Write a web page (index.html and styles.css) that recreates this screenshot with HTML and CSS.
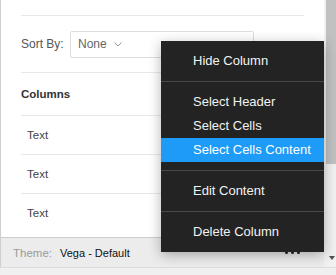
FILE: index.html
```html
<!DOCTYPE html>
<html lang="en">
<head>
	<meta charset="UTF-8">
	<title>Columns - Context Menu</title>
	<link rel="stylesheet" href="styles.css">
</head>
<body>
	<div id="window">
		<div class="main">
			<div class="panel">
				<div class="content">
					<div class="row sort">
						<span class="label">Sort By:</span>
						<div class="select">
							<span>None</span>
							<svg width="8" height="5" viewBox="0 0 8 5"><path d="M0.5 0.5 L4 4 L7.5 0.5" fill="none" stroke="#999" stroke-width="1"/></svg>
						</div>
					</div>
					<div class="row head">Columns</div>
					<div class="row item">Text</div>
					<div class="row item">Text</div>
					<div class="row item last">Text</div>
				</div>
				<div class="footer">
					<span class="theme">Theme:</span>
					<span class="theme_name">Vega - Default</span>
					<span class="dots"><i></i><i></i><i></i></span>
				</div>
			</div>
			<div class="scrollbar">
				<div class="thumb"></div>
				<div class="arrow"></div>
			</div>
		</div>
		<div class="bottom_strip"></div>

		<ul class="menu">
			<li class="group">
				<p>Hide Column</p>
			</li>
			<li class="group">
				<p>Select Header</p>
				<p>Select Cells</p>
				<p class="active">Select Cells Content</p>
			</li>
			<li class="group">
				<p>Edit Content</p>
			</li>
			<li class="group">
				<p>Delete Column</p>
			</li>
		</ul>
	</div>
</body>
</html>
```

FILE: styles.css
```css
body {
	margin: 0;
	font-family: "Liberation Sans", Arial, sans-serif;
	font-size: 12px;
	background: #f0f0f0;
}

ul, li, p {
	margin: 0;
	padding: 0;
	list-style: none;
}

#window {
	position: relative;
	width: 336px;
	height: 275px;
	display: flex;
	flex-direction: column;
	overflow: hidden;
}

.main {
	display: flex;
	height: 267px;
}

.panel {
	width: 323px;
	border-left: 1px solid #cfcfcf;
	display: flex;
	flex-direction: column;
	background: #fff;
}

.content {
	flex: 1;
	padding: 15px 20px 0 20px;
}

.row {
	border-top: 1px solid #e8e8e8;
	display: flex;
	align-items: center;
}

.sort {
	height: 56px;
}

.sort .label {
	color: #555;
	width: 49px;
}

.select {
	width: 175px;
	height: 25px;
	border: 1px solid #dedede;
	border-radius: 2px;
	display: flex;
	align-items: center;
	padding-left: 7px;
	color: #666;
}

.select svg {
	margin-left: 7px;
	margin-top: 1px;
}

.head {
	height: 42px;
	font-weight: bold;
	color: #333;
	font-size: 11.5px;
}

.item {
	height: 38px;
	padding-left: 6px;
	color: #444;
	font-size: 11.5px;
}

.footer {
	height: 29px;
	border-top: 1px solid #cdcdcd;
	background: #ececec;
	display: flex;
	align-items: center;
	padding-left: 12px;
}

.theme {
	color: #9a9a9a;
	font-size: 11.5px;
	width: 47px;
}

.theme_name {
	color: #111;
	font-size: 11px;
}

.dots {
	margin-left: auto;
	margin-right: 24px;
	display: flex;
	gap: 3px;
}

.dots i {
	width: 3px;
	height: 3px;
	border-radius: 50%;
	background: #222;
}

.scrollbar {
	width: 12px;
	background: #f1f1f1;
	display: flex;
	flex-direction: column;
}

.thumb {
	height: 164px;
	margin-left: 2px;
	background: #c1c1c1;
}

.arrow {
	margin-top: auto;
	margin-bottom: 7px;
	margin-left: 5px;
	width: 0;
	height: 0;
	border-left: 3px solid transparent;
	border-right: 3px solid transparent;
	border-top: 4px solid #505050;
}

.bottom_strip {
	flex: 1;
	border-top: 1px solid #dcdcdc;
	background: #f0f0f0;
}

/* context menu over the panel */
.menu {
	position: absolute;
	left: 161px;
	top: 41px;
	width: 163px;
	background: #232323;
	box-shadow: 0 3px 12px rgba(0, 0, 0, 0.3);
	font-size: 13px;
	color: #f2f2f2;
}

.menu .group {
	padding: 8px 0;
	border-top: 1px solid #484848;
}

.menu .group:first-child {
	border-top: none;
}

.menu p {
	height: 24px;
	line-height: 24px;
	padding-left: 32px;
}

.menu .active {
	background: #1e9bf7;
	color: #fff;
}
```
